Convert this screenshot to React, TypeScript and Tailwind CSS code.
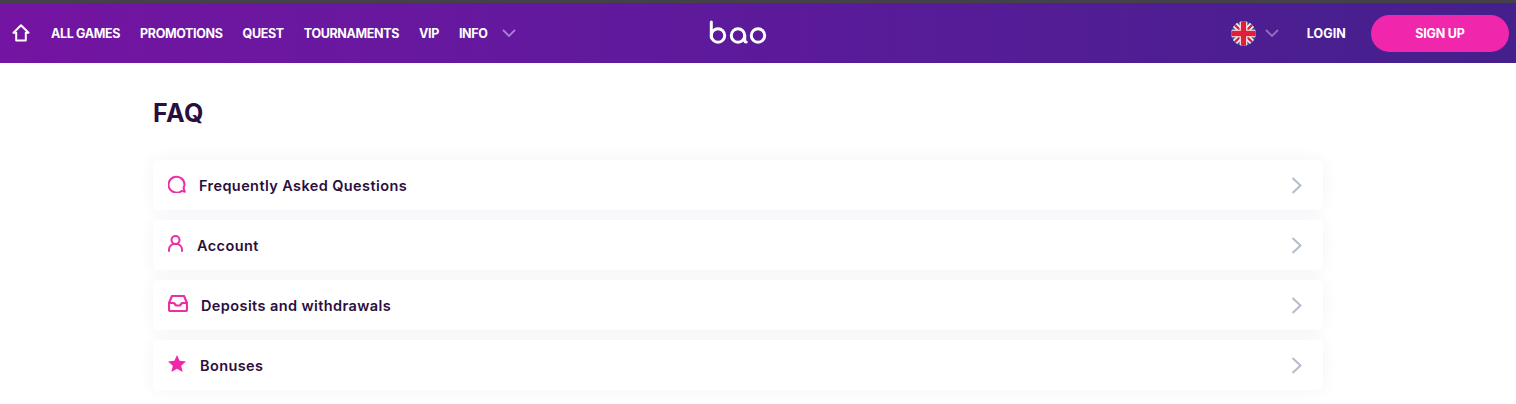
const navItems = ['ALL GAMES', 'PROMOTIONS', 'QUEST', 'TOURNAMENTS', 'VIP', 'INFO']

function BaoLogo() {
  return (
    <svg width="60" height="26" viewBox="0 0 60 26" fill="none" stroke="white" strokeWidth="3" strokeLinecap="round">
      <path d="M3.3 2v15.5" />
      <circle cx="10" cy="15.5" r="6.7" />
      <circle cx="30" cy="15.5" r="6.7" />
      <path d="M36.7 15.5v4.5q0 2 1.5 2" />
      <circle cx="50" cy="15.5" r="6.7" />
    </svg>
  )
}

function HomeIcon() {
  return (
    <svg width="18" height="18" viewBox="0 0 18 18" fill="none" stroke="white" strokeWidth="2" strokeLinejoin="round">
      <path d="M9 1.200L1.500 8.800h2.700V16.500h9.600V8.800h2.700z" />
    </svg>
  )
}

function ChevronDownThin({ color }: { color: string }) {
  return (
    <svg width="14" height="8" viewBox="0 0 14 8" fill="none" stroke={color} strokeWidth="1.8">
      <path d="M1 1l6 6 6-6" />
    </svg>
  )
}

function UkFlag() {
  return (
    <svg width="25" height="25" viewBox="0 0 26 26" className="rounded-full">
      <clipPath id="flag">
        <circle cx="13" cy="13" r="13" />
      </clipPath>
      <g clipPath="url(#flag)">
        <rect width="26" height="26" fill="#2b5aa8" />
        <path d="M0 0L26 26M26 0L0 26" stroke="#f4f4f4" strokeWidth="6" />
        <path d="M0 0L26 26M26 0L0 26" stroke="#e01f3d" strokeWidth="2.500" />
        <path d="M13 0V26M0 13H26" stroke="#f4f4f4" strokeWidth="8" />
        <path d="M13 0V26M0 13H26" stroke="#e01f3d" strokeWidth="5.500" />
      </g>
    </svg>
  )
}

function BubbleIcon() {
  return (
    <svg width="18" height="18" viewBox="0 0 18 18" fill="none" stroke="#e930a8" strokeWidth="2" strokeLinejoin="round">
      <path d="M16.800 16.800l-3.200-.9A8 8 0 1 1 16.500 9a8 8 0 0 1-1 3.900z" />
    </svg>
  )
}

function UserIcon() {
  return (
    <svg width="15" height="17" viewBox="0 0 15 17" fill="none" stroke="#e930a8" strokeWidth="2" strokeLinecap="round">
      <circle cx="7.500" cy="5" r="4" />
      <path d="M1 16v-1.500A5.500 5.500 0 0 1 6.500 9h2a5.500 5.500 0 0 1 5.500 5.500V16" />
    </svg>
  )
}

function InboxIcon() {
  return (
    <svg width="20" height="17" viewBox="0 0 20 17" fill="none" stroke="#e930a8" strokeWidth="2.200" strokeLinejoin="round" strokeLinecap="round">
      <path d="M4 1h12l3 7v6.500a1.500 1.500 0 0 1-1.500 1.500h-15A1.500 1.500 0 0 1 1 14.500V8z" />
      <path d="M1 8h5l2 2.500h4l2-2.500h5" />
    </svg>
  )
}

function StarIcon() {
  return (
    <svg width="18" height="17" viewBox="0 0 18 17" fill="#f026ac">
      <path d="M9 0l2.600 5.800 6.400.7-4.800 4.200 1.400 6.300L9 13.800 3.400 17l1.400-6.300L0 6.500l6.400-.7z" />
    </svg>
  )
}

function ChevronRightThin() {
  return (
    <svg width="11" height="17" viewBox="0 0 11 17" fill="none" stroke="#b4bccb" strokeWidth="2">
      <path d="M1.500 1l8 7.500-8 7.500" />
    </svg>
  )
}

const faqRows = [
  { label: 'Frequently Asked Questions', icon: <BubbleIcon />, gap: 'gap-[13px]' },
  { label: 'Account', icon: <UserIcon />, gap: 'gap-[14px]' },
  { label: 'Deposits and withdrawals', icon: <InboxIcon />, gap: 'gap-[13px]' },
  { label: 'Bonuses', icon: <StarIcon />, gap: 'gap-[14px]' },
]

export default function App() {
  return (
    <div className="min-h-[404px] bg-white font-['Inter',sans-serif] overflow-hidden">
      <div className="h-[3px] bg-[#45414a]" />
      <header className="h-[60px] flex items-center bg-gradient-to-r from-[#7414a2] via-[#5c1a9b] to-[#44208c] pl-[12px] pr-[7px]">
        <div className="w-[696px] flex items-center">
          <HomeIcon />
          <nav className="ml-[21px] mt-[2px] flex items-center gap-[20px] text-[12.5px] font-bold text-white tracking-[-0.35px]">
            {navItems.map((item) => (
              <span key={item}>{item}</span>
            ))}
          </nav>
          <span className="ml-[14px] flex">
            <ChevronDownThin color="#a97fd0" />
          </span>
        </div>
        <BaoLogo />
        <div className="flex-1 flex items-center justify-end">
          <UkFlag />
          <span className="ml-[9px] flex">
            <ChevronDownThin color="#8f6fc0" />
          </span>
          <span className="ml-[28px] mt-[2px] text-[12.5px] font-bold text-white tracking-[0.1px]">LOGIN</span>
          <button className="ml-[25px] w-[138px] h-[37px] pt-[2px] rounded-full bg-[#f026ac] text-white text-[12.5px] font-bold tracking-[-0.2px]">
            SIGN UP
          </button>
        </div>
      </header>

      <main className="w-[1170px] ml-[153px]">
        <h1 className="mt-[33px] text-[25px] leading-[34px] font-bold tracking-[0.5px] text-[#2a0f3e]">FAQ</h1>
        <div className="mt-[30px] flex flex-col gap-[10px]">
          {faqRows.map((row) => (
            <div
              key={row.label}
              className="h-[50px] flex items-center justify-between pl-[15px] pr-[21px] bg-white rounded-[6px] shadow-[0_0_16px_rgba(70,60,140,0.06)]"
            >
              <div className={`flex items-center ${row.gap}`}>
                <span className="flex -mt-[3px]">{row.icon}</span>
                <span className="mt-[1px] text-[14.500px] font-semibold text-[#2a0f3e] tracking-[0.4px]">{row.label}</span>
              </div>
              <ChevronRightThin />
            </div>
          ))}
        </div>
      </main>
    </div>
  )
}
